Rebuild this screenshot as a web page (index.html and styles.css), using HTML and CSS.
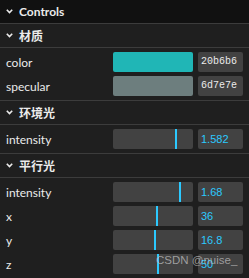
FILE: index.html
```html
<!DOCTYPE html>
<html>
<head>
<meta charset="utf-8">
<link rel="stylesheet" href="styles.css">
</head>
<body>
<div class="gui">
  <div class="title root-title"><svg class="chev" width="7" height="5" viewBox="0 0 7 5"><path d="M0.8 0.8 L3.5 3.6 L6.2 0.8" fill="none" stroke="#ebebeb" stroke-width="1.6"/></svg><span>Controls</span></div>
  <div class="folder">
    <div class="title"><svg class="chev" width="7" height="5" viewBox="0 0 7 5"><path d="M0.8 0.8 L3.5 3.6 L6.2 0.8" fill="none" stroke="#ebebeb" stroke-width="1.6"/></svg><span>材质</span></div>
    <div class="children">
      <div class="ctrl"><div class="name">color</div><div class="widget"><div class="swatch" style="background:#20b6b6"></div><div class="box hex">20b6b6</div></div></div>
      <div class="ctrl"><div class="name">specular</div><div class="widget"><div class="swatch" style="background:#6d7e7e"></div><div class="box hex">6d7e7e</div></div></div>
    </div>
  </div>
  <div class="folder">
    <div class="title"><svg class="chev" width="7" height="5" viewBox="0 0 7 5"><path d="M0.8 0.8 L3.5 3.6 L6.2 0.8" fill="none" stroke="#ebebeb" stroke-width="1.6"/></svg><span>环境光</span></div>
    <div class="children">
      <div class="ctrl"><div class="name">intensity</div><div class="widget"><div class="slider"><div class="fill" style="width:64px"></div></div><div class="box num">1.582</div></div></div>
    </div>
  </div>
  <div class="folder">
    <div class="title"><svg class="chev" width="7" height="5" viewBox="0 0 7 5"><path d="M0.8 0.8 L3.5 3.6 L6.2 0.8" fill="none" stroke="#ebebeb" stroke-width="1.6"/></svg><span>平行光</span></div>
    <div class="children">
      <div class="ctrl"><div class="name">intensity</div><div class="widget"><div class="slider"><div class="fill" style="width:68px"></div></div><div class="box num">1.68</div></div></div>
      <div class="ctrl"><div class="name">x</div><div class="widget"><div class="slider"><div class="fill" style="width:45px"></div></div><div class="box num">36</div></div></div>
      <div class="ctrl"><div class="name">y</div><div class="widget"><div class="slider"><div class="fill" style="width:43px"></div></div><div class="box num">16.8</div></div></div>
      <div class="ctrl"><div class="name">z</div><div class="widget"><div class="slider"><div class="fill" style="width:46px"></div></div><div class="box num">50</div></div></div>
    </div>
  </div>
  <div class="watermark">CSDN @nuise_</div>
</div>
</body>
</html>
```
FILE: styles.css
```css
html, body {
  margin: 0;
  padding: 0;
  background: #1f1f1f;
}
.gui {
  position: relative;
  width: 249px;
  height: 278px;
  background: #1f1f1f;
  color: #ebebeb;
  font-family: Lato, "Noto Sans CJK SC", sans-serif;
  font-size: 12px;
  overflow: hidden;
}
.title {
  display: flex;
  align-items: center;
  height: 23px;
  padding-left: 6px;
  font-weight: bold;
  font-size: 12px;
  font-family: Lato, "Noto Sans CJK SC", sans-serif;
}
.root-title {
  background: #111111;
}
.chev {
  display: block;
  margin-right: 6px;
}
.folder > .title {
  border-top: 1px solid #3c3c3c;
  border-bottom: 1px solid #3c3c3c;
}
.children {
  padding: 4px 0;
}
.ctrl {
  display: flex;
  align-items: center;
  height: 20px;
  padding: 0 6px;
}
.ctrl + .ctrl {
  margin-top: 4px;
}
.name {
  flex: 0 0 107px;
  white-space: nowrap;
}
.widget {
  flex: 1;
  display: flex;
  gap: 5px;
  height: 20px;
}
.swatch {
  flex: 1;
  border-radius: 2px;
}
.slider {
  flex: 1;
  background: #424242;
  border-radius: 2px;
  overflow: hidden;
}
.fill {
  height: 100%;
  box-sizing: border-box;
  border-right: 2px solid #2cc9ff;
}
.box {
  flex: 0 0 45px;
  box-sizing: border-box;
  background: #424242;
  border-radius: 2px;
  padding-left: 3px;
  line-height: 20px;
}
.hex {
  font-family: "Liberation Mono", monospace;
  font-size: 10px;
  color: #ebebeb;
}
.num {
  font-family: "Liberation Sans", sans-serif;
  font-size: 11px;
  color: #2cc9ff;
}
.watermark {
  position: absolute;
  left: 156px;
  top: 254px;
  font-family: "Liberation Sans", sans-serif;
  font-size: 11.5px;
  color: rgba(190, 190, 190, 0.75);
  white-space: nowrap;
}
```
